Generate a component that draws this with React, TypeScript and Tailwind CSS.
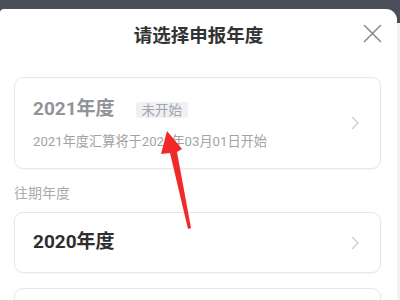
import React from 'react';

const font = { fontFamily: 'Roboto, "Noto Sans CJK SC", sans-serif' };

const Chevron = () => (
  <svg width="9" height="14" viewBox="0 0 9 14" fill="none" className="shrink-0">
    <path d="M1.5 1.5L7 7l-5.5 5.5" stroke="#c9cbd0" strokeWidth="1.3" strokeLinecap="round" strokeLinejoin="round" />
  </svg>
);

interface YearCardProps {
  children?: React.ReactNode;
  className?: string;
}

const YearCard: React.FC<YearCardProps> = ({ children, className = '' }) => (
  <div
    className={`flex items-center justify-between rounded-[9px] border border-[#e7e8eb] bg-white pl-[18px] pr-[20px] shadow-[0_1px_2px_rgba(0,0,0,0.04)] ${className}`}
  >
    {children}
  </div>
);

const App = () => {
  return (
    <div className="relative h-[300px] w-[400px] overflow-hidden bg-[#4b4f59] pt-[9px]" style={font}>
      <div className="flex h-full">
        <div className="h-full flex-1 rounded-tl-[4px] rounded-tr-[11px] bg-white">
          <div className="relative flex h-[56px] items-center justify-center">
            <span className="text-[18.5px] font-semibold text-[#333333]">请选择申报年度</span>
            <svg
              className="absolute right-[15px] top-[15px]"
              width="19"
              height="19"
              viewBox="0 0 19 19"
              fill="none"
            >
              <path d="M1.5 1.5l16 16M17.5 1.5l-16 16" stroke="#8c8c8c" strokeWidth="1.6" strokeLinecap="round" />
            </svg>
          </div>

          <div className="ml-[14px] mr-[16px] mt-[12px]">
            <YearCard className="h-[92px]">
              <div className="flex flex-col">
                <div className="flex h-[28px] items-center">
                  <span className="text-[19px] font-bold text-[#909399]">2021年度</span>
                  <span className="ml-[21px] rounded-[3px] bg-[#eef0f4] px-[6px] text-[13.5px] leading-[16px] text-[#a3a6ab]">
                    未开始
                  </span>
                </div>
                <span className="mt-[9px] text-[13.2px] leading-[18px] text-[#a3a3a3]">
                  2021年度汇算将于2022年03月01日开始
                </span>
              </div>
              <Chevron />
            </YearCard>

            <div className="mt-[14px] text-[14px] leading-[20px] text-[#ababab]">往期年度</div>

            <YearCard className="mt-[9px] h-[61px]">
              <span className="text-[19px] font-bold text-[#2e2e2e]">2020年度</span>
              <Chevron />
            </YearCard>

            <YearCard className="mt-[15px] h-[61px]" />
          </div>
        </div>
        <div className="mt-[14px] w-[3px] bg-[#f1f2f4]" />
      </div>

      <svg className="absolute left-0 top-0" width="400" height="300" viewBox="0 0 400 300">
        <polygon
          points="167,131 182,149 177,152 191,228 188,229 170,153 161,154"
          fill="#f2292b"
        />
      </svg>
    </div>
  );
};

export default App;
